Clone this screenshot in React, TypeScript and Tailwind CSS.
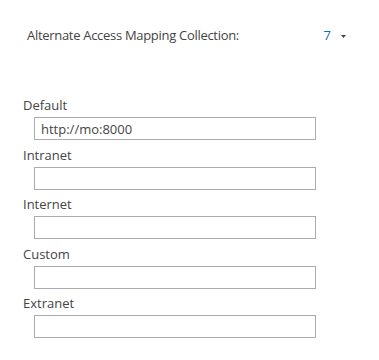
import React from "react";

const fields = [
  { label: "Default", value: "http://mo:8000", h: "h-[27px]" },
  { label: "Intranet", value: "", h: "h-[27px]" },
  { label: "Internet", value: "", h: "h-[26px]" },
  { label: "Custom", value: "", h: "h-[27px]" },
  { label: "Extranet", value: "", h: "h-[26px]" },
];

export default function App() {
  return (
    <div
      className="w-[379px] h-[360px] bg-white text-[13px] text-[#444444]"
      style={{ fontFamily: '"Open Sans", "Segoe UI", sans-serif' }}
    >
      <div className="flex items-center pt-[20px] h-[50px] pl-[27px]">
        <span className="leading-[18px] tracking-[-0.3px]">Alternate Access Mapping Collection:</span>
        <span className="ml-auto leading-[18px] text-[#0072c6]">7</span>
        <svg className="ml-[10px] mr-[33px] mt-[3px]" width="5" height="3" viewBox="0 0 5 3">
          <polygon points="0,0 5,0 2.5,3" fill="#444444" />
        </svg>
      </div>
      <div className="pt-[40px]">
        {fields.map((f) => (
          <div key={f.label}>
            <div className={`${f.h} pl-[23px] flex items-end pb-[3px] leading-[18px]`}>{f.label}</div>
            <div className="ml-[34px] w-[282px] h-[23px] border border-[#ababab] flex items-center pl-[6px] leading-[18px]">
              {f.value}
            </div>
          </div>
        ))}
      </div>
    </div>
  );
}
